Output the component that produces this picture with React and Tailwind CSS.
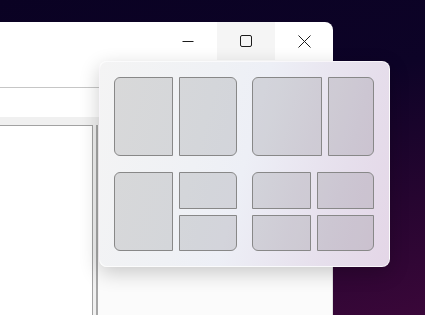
import React from 'react';

function Tile({ className }) {
  return <div className={`border border-[#888888] bg-black/[0.11] ${className}`} />;
}

function TitleButton({ hover, children }) {
  return (
    <div className={`w-[58px] h-[38px] flex items-center justify-center ${hover ? 'bg-[#f5f5f5]' : ''}`}>
      {children}
    </div>
  );
}

export default function App() {
  return (
    <div className="relative w-[425px] h-[315px] overflow-hidden bg-[linear-gradient(165deg,#0a0223_0%,#0d0327_40%,#260530_72%,#3a0739_100%)] pt-[22px] font-['Segoe_UI','Noto_Sans',sans-serif]">
      {/* window */}
      <div className="w-[333px] h-[293px] bg-white rounded-tr-[8px] flex flex-col overflow-hidden">
        <div className="h-[38px] flex justify-end shrink-0">
          <TitleButton>
            <svg width="12" height="12" viewBox="0 0 12 12">
              <path d="M0.5 6.5H11.5" stroke="#1c1c1c" strokeWidth="1" />
            </svg>
          </TitleButton>
          <TitleButton hover>
            <div className="w-[12px] h-[12px] border border-[#1c1c1c] rounded-[2px]" />
          </TitleButton>
          <TitleButton>
            <svg width="13" height="13" viewBox="0 0 13 13">
              <path d="M0.5 0.5L12.5 12.5M12.5 0.5L0.5 12.5" stroke="#1c1c1c" strokeWidth="1" />
            </svg>
          </TitleButton>
        </div>
        <div className="h-[28px] border-b border-[#c6c6c6] shrink-0" />
        <div className="h-[29px] shrink-0" />
        <div className="flex-1 flex flex-col bg-[#f0f0f0] pt-[8px]">
          <div className="flex-1 flex">
            <div className="w-[93px] bg-white border-t border-r border-[#a2a2a2]" />
            <div className="w-[3px]" />
            <div className="w-[2px] bg-[#a6a6a6]" />
            <div className="flex-1 bg-[#fbfbfb] border-r border-[#e2e2e2]" />
          </div>
        </div>
      </div>

      {/* snap layouts flyout */}
      <div className="absolute left-[99px] top-[61px] w-[291px] h-[206px] rounded-[8px] border border-white/70 shadow-[0_6px_20px_rgba(0,0,0,0.2)] bg-[linear-gradient(105deg,#f4f4f4_0%,#eff1f5_35%,#edeff6_50%,#e6dfec_80%,#e4d6e7_100%)] pt-[15px] pl-[14px] flex flex-col gap-[16px]">
        <div className="flex gap-[15px]">
          <div className="flex gap-[6px]">
            <Tile className="w-[59px] h-[79px] rounded-l-[6px]" />
            <Tile className="w-[58px] h-[79px] rounded-r-[6px]" />
          </div>
          <div className="flex gap-[6px]">
            <Tile className="w-[70px] h-[79px] rounded-l-[6px]" />
            <Tile className="w-[46px] h-[79px] rounded-r-[6px]" />
          </div>
        </div>
        <div className="flex gap-[15px]">
          <div className="flex gap-[6px]">
            <Tile className="w-[59px] h-[79px] rounded-l-[6px]" />
            <div className="flex flex-col gap-[6px]">
              <Tile className="w-[58px] h-[37px] rounded-tr-[6px]" />
              <Tile className="w-[58px] h-[36px] rounded-br-[6px]" />
            </div>
          </div>
          <div className="grid grid-cols-[59px_57px] grid-rows-[37px_36px] gap-[6px]">
            <Tile className="rounded-tl-[6px]" />
            <Tile className="rounded-tr-[6px]" />
            <Tile className="rounded-bl-[6px]" />
            <Tile className="rounded-br-[6px]" />
          </div>
        </div>
      </div>
    </div>
  );
}
